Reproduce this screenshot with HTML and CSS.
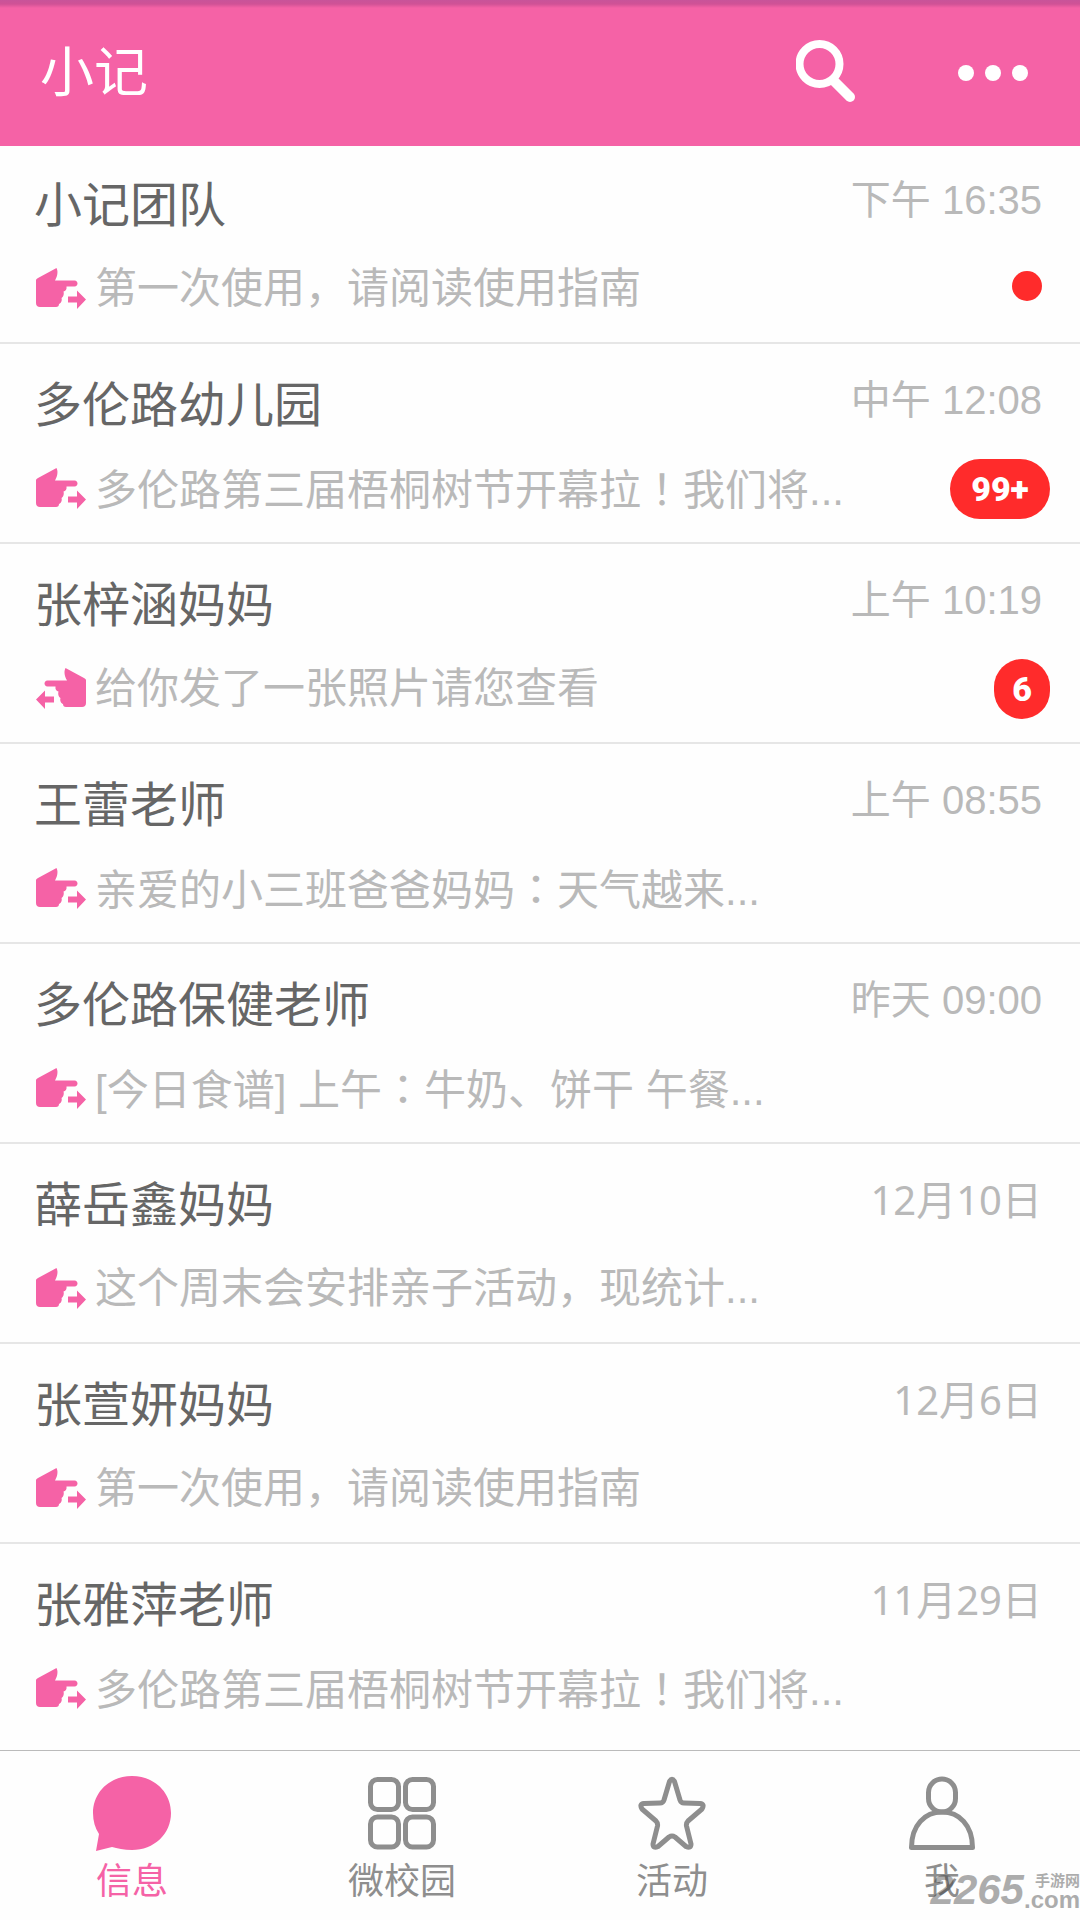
FILE: index.html
```html
<!DOCTYPE html>
<html lang="zh-CN">
<head>
<meta charset="utf-8">
<meta name="viewport" content="width=device-width, initial-scale=1">
<title>小记</title>
<link rel="stylesheet" href="styles.css">
</head>
<body>
<svg class="defs" aria-hidden="true">
  <symbol id="hand" viewBox="0 0 50 42">
    <path d="M0 12.500C0 11 1 10.500 2 10L20.500 0C22 3 22 7 19 12.500H38.500C42.500 12.500 42.500 18.500 38.500 18.500H30.500C31 21.500 29.500 23 27.500 23.500C28.500 27 26.500 29.500 25.500 30C26.500 33 24.500 35.500 23 36C23 38 22 39 20 39H4C1.500 39 0 37.500 0 35Z"/>
    <path d="M32 28.500H41V22.500L50 31.500L41 41V34.500H32Z"/>
  </symbol>
</svg>
<header class="topbar">
  <h1 class="brand">小记</h1>
  <button class="icon-button" type="button" aria-label="搜索">
    <svg class="search-icon" viewBox="0 0 60 64"><circle cx="23.500" cy="25" r="20" fill="none" stroke="#fff" stroke-width="8"/><path d="M38 42L54 58" stroke="#fff" stroke-width="10" stroke-linecap="round"/></svg>
  </button>
  <button class="icon-button" type="button" aria-label="更多">
    <svg class="more-icon" viewBox="0 0 70 16"><g fill="#fff"><circle cx="8" cy="8" r="8"/><circle cx="35" cy="8" r="8"/><circle cx="62" cy="8" r="8"/></g></svg>
  </button>
</header>
<main class="chats">
  <a class="chat" href="#"><span class="name">小记团队</span><time class="time">下午 16:35</time><span class="preview"><svg class="hand"><use href="#hand"/></svg><span class="message">第一次使用，请阅读使用指南</span></span><span class="dot"></span></a>
  <a class="chat" href="#"><span class="name">多伦路幼儿园</span><time class="time">中午 12:08</time><span class="preview"><svg class="hand"><use href="#hand"/></svg><span class="message">多伦路第三届梧桐树节开幕拉<span class="mark" lang="ja">！</span>我们将...</span></span><span class="badge wide">99+</span></a>
  <a class="chat" href="#"><span class="name">张梓涵妈妈</span><time class="time">上午 10:19</time><span class="preview"><svg class="hand received"><use href="#hand"/></svg><span class="message">给你发了一张照片请您查看</span></span><span class="badge">6</span></a>
  <a class="chat" href="#"><span class="name">王蕾老师</span><time class="time">上午 08:55</time><span class="preview"><svg class="hand"><use href="#hand"/></svg><span class="message">亲爱的小三班爸爸妈妈<span class="mark" lang="ja">：</span>天气越来...</span></span></a>
  <a class="chat" href="#"><span class="name">多伦路保健老师</span><time class="time">昨天 09:00</time><span class="preview"><svg class="hand"><use href="#hand"/></svg><span class="message">[今日食谱] 上午<span class="mark" lang="ja">：</span>牛奶、饼干 午餐...</span></span></a>
  <a class="chat" href="#"><span class="name">薛岳鑫妈妈</span><time class="time date">12月10日</time><span class="preview"><svg class="hand"><use href="#hand"/></svg><span class="message">这个周末会安排亲子活动，现统计...</span></span></a>
  <a class="chat" href="#"><span class="name">张萱妍妈妈</span><time class="time date">12月6日</time><span class="preview"><svg class="hand"><use href="#hand"/></svg><span class="message">第一次使用，请阅读使用指南</span></span></a>
  <a class="chat" href="#"><span class="name">张雅萍老师</span><time class="time date">11月29日</time><span class="preview"><svg class="hand"><use href="#hand"/></svg><span class="message">多伦路第三届梧桐树节开幕拉<span class="mark" lang="ja">！</span>我们将...</span></span></a>
</main>
<nav class="tabs">
  <a class="tab active" href="#"><svg class="tab-icon" viewBox="0 0 80 76"><path d="M40 1C62 1 79 17 79 38S62 75 40 75C32 75 25 73 20 72L4 76L7 59C3 53 1 46 1 38C1 17 18 1 40 1Z" fill="currentColor"/></svg>信息</a>
  <a class="tab" href="#"><svg class="tab-icon" viewBox="0 0 80 76"><g fill="none" stroke="currentColor" stroke-width="5"><rect x="8.500" y="4.500" width="28" height="30" rx="7"/><rect x="43.500" y="4.500" width="28" height="30" rx="7"/><rect x="8.500" y="42" width="28" height="30" rx="7"/><rect x="43.500" y="42" width="28" height="30" rx="7"/></g></svg>微校园</a>
  <a class="tab" href="#"><svg class="tab-icon" viewBox="0 0 80 76"><path d="M37.500 6.500Q40 2 42.500 6.500L48 25Q49 28 52 28L68 28.500Q73 29 70 34L56 46Q54 48 54.500 51L59 69Q59 74 54 71.500L43 62Q40 60 37 62L26 71.500Q21 74 21 69L25.500 51Q26 48 24 46L10 34Q7 29 12 28.500L28 28Q31 28 32 25Z" fill="none" stroke="currentColor" stroke-width="5" stroke-linejoin="round"/></svg>活动</a>
  <a class="tab" href="#"><svg class="tab-icon" viewBox="0 0 80 76"><g fill="none" stroke="currentColor" stroke-width="5" stroke-linejoin="round"><rect x="26.500" y="4" width="27" height="33" rx="13.500"/><path d="M9.500 72.500C9.500 50 23 37 40 37S70.500 50 70.500 72.500Z"/></g></svg>我</a>
  <div class="watermark"><span class="mark-number">2265</span><span class="mark-site"><span>手游网</span><span class="mark-com">.com</span></span></div>
</nav>
</body>
</html>
```
FILE: styles.css
```css
* { box-sizing: border-box; }
body {
  margin: 0;
  min-height: 100vh;
  display: flex;
  flex-direction: column;
  background: #fefefe;
  font-family: "Liberation Sans", "Noto Sans CJK SC", sans-serif;
}
a { color: inherit; text-decoration: none; }
.defs { position: absolute; width: 0; height: 0; }

.topbar {
  height: 146px;
  padding: 0 52px 0 40px;
  display: flex;
  align-items: center;
  background: linear-gradient(#c8549a, #d05296 4px, #f562a6 8px);
}
.brand {
  margin: 0 auto 0 0;
  color: #fff;
  font-size: 54px;
  font-weight: 400;
  line-height: 60px;
}
.icon-button {
  padding: 0;
  border: 0;
  background: none;
  display: flex;
  margin-left: 102px;
}
.search-icon { width: 60px; height: 64px; margin-bottom: 4px; }
.more-icon { width: 70px; height: 16px; }

.chats { flex: 1; }
.chat {
  height: 200px;
  padding: 26px 38px 0 34px;
  display: grid;
  grid-template-columns: 1fr auto;
  grid-template-rows: 72px 94px;
  align-items: center;
  border-bottom: 2px solid #e6e6e6;
}
.chat:first-child { height: 198px; padding-top: 24px; }
.chat:last-child { border-bottom: 0; }
.name { color: #666; font-size: 48px; line-height: 72px; }
.time {
  margin-bottom: 12px;
  color: #b9b9b9;
  font-size: 40px;
  line-height: 60px;
  justify-self: end;
}
.date { font-family: "Noto Sans", "Noto Sans CJK SC", sans-serif; }
.preview {
  padding-left: 2px;
  display: flex;
  align-items: center;
  gap: 9px;
  min-width: 0;
}
.hand { width: 50px; height: 42px; fill: #f562a6; flex: none; }
.received { transform: scaleX(-1); }
.message { color: #b9b9b9; font-size: 42px; line-height: 64px; white-space: nowrap; }
.mark { font-family: "Noto Sans CJK JP", sans-serif; }
.dot {
  width: 30px;
  height: 30px;
  margin-bottom: 6px;
  border-radius: 50%;
  background: #ff2b2b;
  justify-self: end;
}
.badge {
  width: 56px;
  height: 60px;
  margin-right: -8px;
  border-radius: 30px;
  background: #ff2b2b;
  color: #fff;
  font: 900 34px/60px Roboto, sans-serif;
  text-align: center;
  justify-self: end;
}
.wide { width: 100px; }

.tabs {
  position: relative;
  height: 170px;
  padding-top: 24px;
  display: grid;
  grid-template-columns: repeat(4, 1fr);
  border-top: 1px solid #bbb;
}
.tab {
  padding-right: 6px;
  display: flex;
  flex-direction: column;
  align-items: center;
  gap: 4px;
  color: #8e8e8e;
  font-size: 36px;
  line-height: 54px;
}
.tab-icon { width: 80px; height: 76px; }
.active { color: #f562a6; }
.watermark {
  position: absolute;
  right: 0;
  bottom: 12px;
  display: flex;
  align-items: flex-end;
  color: #333;
  opacity: 0.4;
}
.mark-number { font: italic 700 42px/36px "Liberation Sans", sans-serif; }
.mark-site {
  display: flex;
  flex-direction: column;
  gap: 2px;
  font-size: 15px;
  font-weight: 700;
  line-height: 18px;
  text-align: right;
}
.mark-com { font-size: 24px; line-height: 16px; }
```
